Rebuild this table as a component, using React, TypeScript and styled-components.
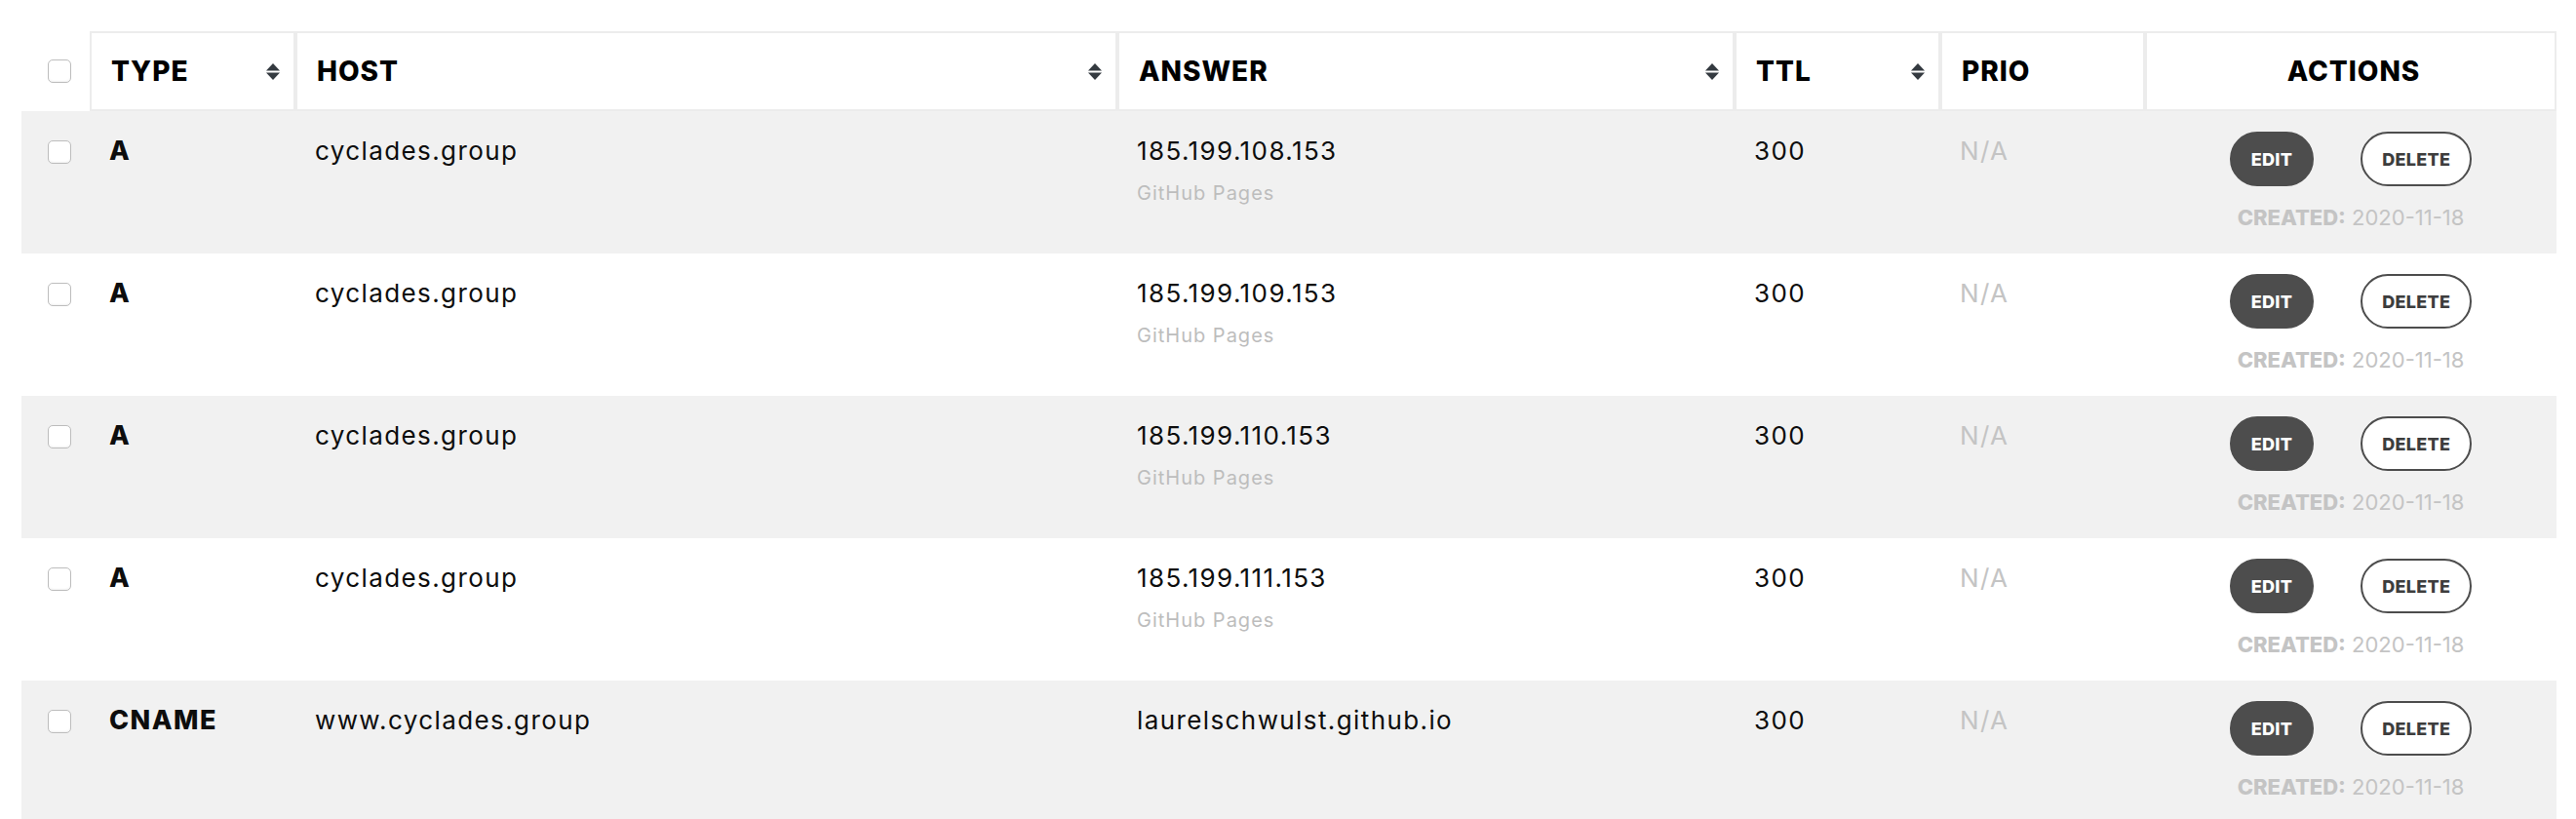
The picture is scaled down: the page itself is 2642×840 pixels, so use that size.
import React from "react";
import styled, { createGlobalStyle } from "styled-components";

type DnsRecord = {
  id: number;
  type: string;
  host: string;
  answer: string;
  note?: string;
  ttl: number;
  prio?: number;
  created: string;
};

const records: DnsRecord[] = [
  { id: 1, type: "A", host: "cyclades.group", answer: "185.199.108.153", note: "GitHub Pages", ttl: 300, created: "2020-11-18" },
  { id: 2, type: "A", host: "cyclades.group", answer: "185.199.109.153", note: "GitHub Pages", ttl: 300, created: "2020-11-18" },
  { id: 3, type: "A", host: "cyclades.group", answer: "185.199.110.153", note: "GitHub Pages", ttl: 300, created: "2020-11-18" },
  { id: 4, type: "A", host: "cyclades.group", answer: "185.199.111.153", note: "GitHub Pages", ttl: 300, created: "2020-11-18" },
  { id: 5, type: "CNAME", host: "www.cyclades.group", answer: "laurelschwulst.github.io", ttl: 300, created: "2020-11-18" },
];

const columns = "70px 211px 843px 633px 211px 210px 422px";

const SortIcon: React.FC = () => (
  <svg width="14" height="17" viewBox="0 0 14 17" aria-hidden="true">
    <path d="M7 0 L14 7.5 H0 Z" fill="#343a40" />
    <path d="M0 9.5 H14 L7 17 Z" fill="#343a40" />
  </svg>
);

const App: React.FC = () => {
  return (
    <>
      <GlobalStyle />
      <Page>
        <Table>
          <HeaderRow>
            <CheckHead>
              <Checkbox />
            </CheckHead>
            <HeadCell>
              TYPE
              <SortIcon />
            </HeadCell>
            <HeadCell>
              HOST
              <SortIcon />
            </HeadCell>
            <HeadCell>
              ANSWER
              <SortIcon />
            </HeadCell>
            <HeadCell>
              TTL
              <SortIcon />
            </HeadCell>
            <HeadCell>PRIO</HeadCell>
            <HeadCell $center>ACTIONS</HeadCell>
          </HeaderRow>

          {records.map((r, i) => (
            <Row key={r.id} $shaded={i % 2 === 0}>
              <CheckCell>
                <Checkbox />
              </CheckCell>
              <Cell>
                <Value $bold>{r.type}</Value>
              </Cell>
              <Cell>
                <Value>{r.host}</Value>
              </Cell>
              <Cell>
                <Value>{r.answer}</Value>
                {r.note ? <Note>{r.note}</Note> : undefined}
              </Cell>
              <Cell>
                <Value>{r.ttl}</Value>
              </Cell>
              <Cell>
                <Value $muted={r.prio === undefined}>{r.prio ?? "N/A"}</Value>
              </Cell>
              <ActionsCell>
                <ButtonGroup>
                  <PillButton $variant="solid">EDIT</PillButton>
                  <PillButton $variant="outline">DELETE</PillButton>
                </ButtonGroup>
                <Created>
                  <strong>CREATED:</strong> {r.created}
                </Created>
              </ActionsCell>
            </Row>
          ))}
        </Table>
      </Page>
    </>
  );
};

const GlobalStyle = createGlobalStyle`
  body {
    margin: 0;
    background: #ffffff;
    font-family: Inter, "Liberation Sans", sans-serif;
    color: #111111;
  }
`;

const Page = styled.div`
  padding: 32px 20px 0 22px;
`;

const Table = styled.div`
  width: 2600px;
`;

const HeaderRow = styled.div`
  display: grid;
  grid-template-columns: ${columns};
  height: 82px;
`;

const CheckHead = styled.div`
  display: flex;
  align-items: center;
  padding-left: 27px;
`;

const HeadCell = styled.div<{ $center?: boolean }>`
  display: flex;
  align-items: center;
  justify-content: ${(p) => (p.$center ? "center" : "space-between")};
  border: 2px solid #ececec;
  padding: 0 14px 0 20px;
  font-size: 28px;
  font-weight: 800;
  letter-spacing: 1px;
  color: #000000;
`;

const Checkbox = styled.span`
  display: block;
  width: 22px;
  height: 22px;
  border: 1px solid #bdbdbd;
  border-radius: 5px;
  background: #ffffff;
  box-shadow: inset 0 -1px 2px rgba(0, 0, 0, 0.06);
`;

const Row = styled.div<{ $shaded: boolean }>`
  display: grid;
  grid-template-columns: ${columns};
  height: 146px;
  background: ${(p) => (p.$shaded ? "#f1f1f1" : "#ffffff")};
`;

const CheckCell = styled.div`
  padding: 30px 0 0 27px;
`;

const Cell = styled.div`
  padding: 25px 20px 0;
`;

const Value = styled.div<{ $bold?: boolean; $muted?: boolean }>`
  font-size: ${(p) => (p.$bold ? "27px" : "26px")};
  line-height: 32px;
  letter-spacing: ${(p) => (p.$bold ? "1.5px" : "1.4px")};
  font-weight: ${(p) => (p.$bold ? 800 : 400)};
  color: ${(p) => (p.$muted ? "#c4c4c4" : "#0d0d0d")};
`;

const Note = styled.div`
  margin-top: 15px;
  font-size: 20px;
  line-height: 24px;
  letter-spacing: 1px;
  color: #bdbdbd;
`;

const ActionsCell = styled.div`
  display: flex;
  flex-direction: column;
  align-items: center;
  padding-top: 21px;
`;

const ButtonGroup = styled.div`
  display: flex;
  gap: 48px;
`;

const PillButton = styled.button<{ $variant: "solid" | "outline" }>`
  height: 56px;
  padding: 0 20px;
  border: 2px solid #4d4d4d;
  border-radius: 28px;
  background: ${(p) => (p.$variant === "solid" ? "#4d4d4d" : "#ffffff")};
  color: ${(p) => (p.$variant === "solid" ? "#ffffff" : "#3d3d3d")};
  font-family: Inter, "Liberation Sans", sans-serif;
  font-size: 18px;
  font-weight: 800;
  letter-spacing: 0.3px;
  cursor: pointer;
`;

const Created = styled.div`
  margin-top: 19px;
  font-size: 22px;
  line-height: 26px;
  color: #c4c4c4;

  strong {
    font-weight: 800;
  }
`;

export default App;
